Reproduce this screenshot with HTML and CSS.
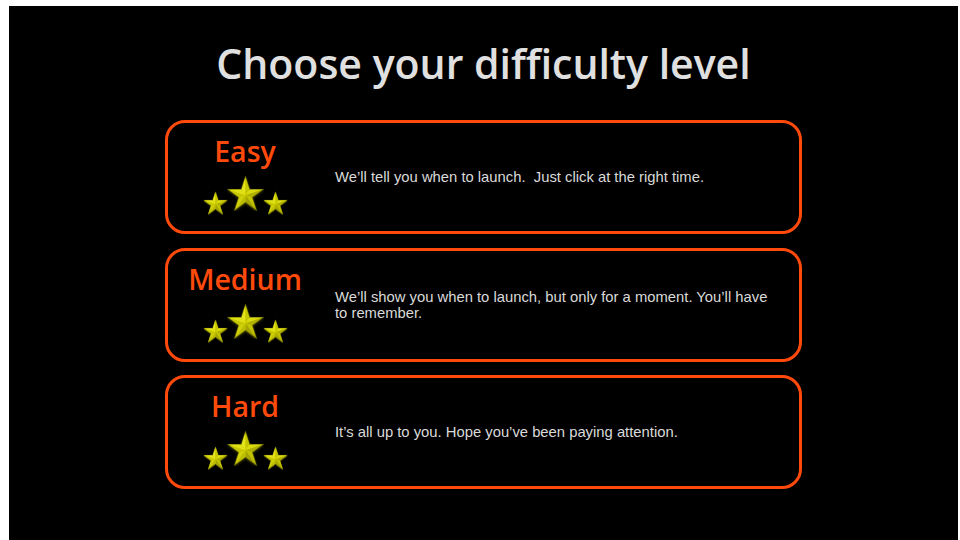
FILE: index.html
```html
<!DOCTYPE html>
<html>
<head>
<meta charset="utf-8">
<link rel="stylesheet" href="styles.css">
</head>
<body>
<svg class="defs" width="0" height="0" aria-hidden="true">
  <defs>
    <filter id="glow" x="-30%" y="-30%" width="160%" height="160%">
      <feGaussianBlur in="SourceAlpha" stdDeviation="3"/>
      <feOffset dx="1" dy="2" result="b"/>
      <feFlood flood-color="#3a3a00"/>
      <feComposite in2="b" operator="in"/>
      <feMerge><feMergeNode/><feMergeNode in="SourceGraphic"/></feMerge>
    </filter>
    <symbol id="star" viewBox="0 0 100 95">
      <g filter="url(#glow)">
        <polygon points="50,3 61,36.9 96.6,36.9 67.8,57.8 78.8,91.6 50,70.7 21.2,91.6 32.2,57.8 3.4,36.9 39,36.9" fill="#c9c900" stroke="#5e5e00" stroke-width="3"/>
        <polygon points="50,52 50,3 39,36.9" fill="#e4e41a"/>
        <polygon points="50,52 50,3 61,36.9" fill="#c4c400"/>
        <polygon points="50,52 61,36.9 96.6,36.9" fill="#dada10"/>
        <polygon points="50,52 96.6,36.9 67.8,57.8" fill="#b0b000"/>
        <polygon points="50,52 67.8,57.8 78.8,91.6" fill="#c2c200"/>
        <polygon points="50,52 78.8,91.6 50,70.7" fill="#a4a400"/>
        <polygon points="50,52 50,70.7 21.2,91.6" fill="#bcbc00"/>
        <polygon points="50,52 21.2,91.6 32.2,57.8" fill="#d0d008"/>
        <polygon points="50,52 32.2,57.8 3.4,36.9" fill="#c8c800"/>
        <polygon points="50,52 3.4,36.9 39,36.9" fill="#e0e018"/>
      </g>
    </symbol>
  </defs>
</svg>
<main class="screen">
  <h1 class="title">Choose your difficulty level</h1>
  <section class="levels">
    <div class="card">
      <div class="rank">
        <div class="name">Easy</div>
        <div class="stars">
          <svg class="star small"><use href="#star"/></svg>
          <svg class="star big"><use href="#star"/></svg>
          <svg class="star small"><use href="#star"/></svg>
        </div>
      </div>
      <p class="desc">We’ll tell you when to launch.&nbsp;&nbsp;Just click at the right time.</p>
    </div>
    <div class="card">
      <div class="rank">
        <div class="name">Medium</div>
        <div class="stars">
          <svg class="star small"><use href="#star"/></svg>
          <svg class="star big"><use href="#star"/></svg>
          <svg class="star small"><use href="#star"/></svg>
        </div>
      </div>
      <p class="desc">We’ll show you when to launch, but only for a moment. You’ll have to remember.</p>
    </div>
    <div class="card">
      <div class="rank">
        <div class="name">Hard</div>
        <div class="stars">
          <svg class="star small"><use href="#star"/></svg>
          <svg class="star big"><use href="#star"/></svg>
          <svg class="star small"><use href="#star"/></svg>
        </div>
      </div>
      <p class="desc">It’s all up to you. Hope you’ve been paying attention.</p>
    </div>
  </section>
</main>
</body>
</html>
```
FILE: styles.css
```css
html, body {
  margin: 0;
  padding: 0;
  background: #ffffff;
}

.defs {
  position: absolute;
  width: 0;
  height: 0;
}

.screen {
  margin: 6px 0 0 9px;
  width: 949px;
  height: 534px;
  background: #000000;
  display: flex;
  flex-direction: column;
  align-items: center;
  overflow: hidden;
}

.title {
  margin: 30px 0 0 0;
  font-family: "Open Sans", "DejaVu Sans", sans-serif;
  font-weight: 600;
  font-size: 41px;
  line-height: 54px;
  color: #e0e0e0;
  letter-spacing: 0;
}

.levels {
  margin-top: 30px;
  display: flex;
  flex-direction: column;
  gap: 13.5px;
}

.card {
  box-sizing: border-box;
  width: 637px;
  height: 114px;
  border: 3px solid #ff4a0c;
  border-radius: 20px;
  display: grid;
  grid-template-columns: 154px 1fr;
  column-gap: 13px;
  align-items: center;
  padding-right: 20px;
}

.rank {
  align-self: start;
  padding-top: 10px;
  display: flex;
  flex-direction: column;
  align-items: center;
}

.name {
  font-family: "Open Sans", "DejaVu Sans", sans-serif;
  font-weight: 600;
  font-size: 28.5px;
  line-height: 36px;
  color: #ff4a0c;
}

.stars {
  margin-top: 7px;
  display: flex;
  align-items: flex-end;
  height: 39px;
}

.star {
  display: block;
}

.star.small {
  width: 25px;
  height: 24px;
}

.star.big {
  width: 37px;
  height: 35px;
  margin: 0 -1px 4px -1px;
}

.desc {
  margin: 0;
  font-family: "Liberation Sans", Arial, sans-serif;
  font-size: 14.8px;
  line-height: 16px;
  color: #dadada;
}
```
